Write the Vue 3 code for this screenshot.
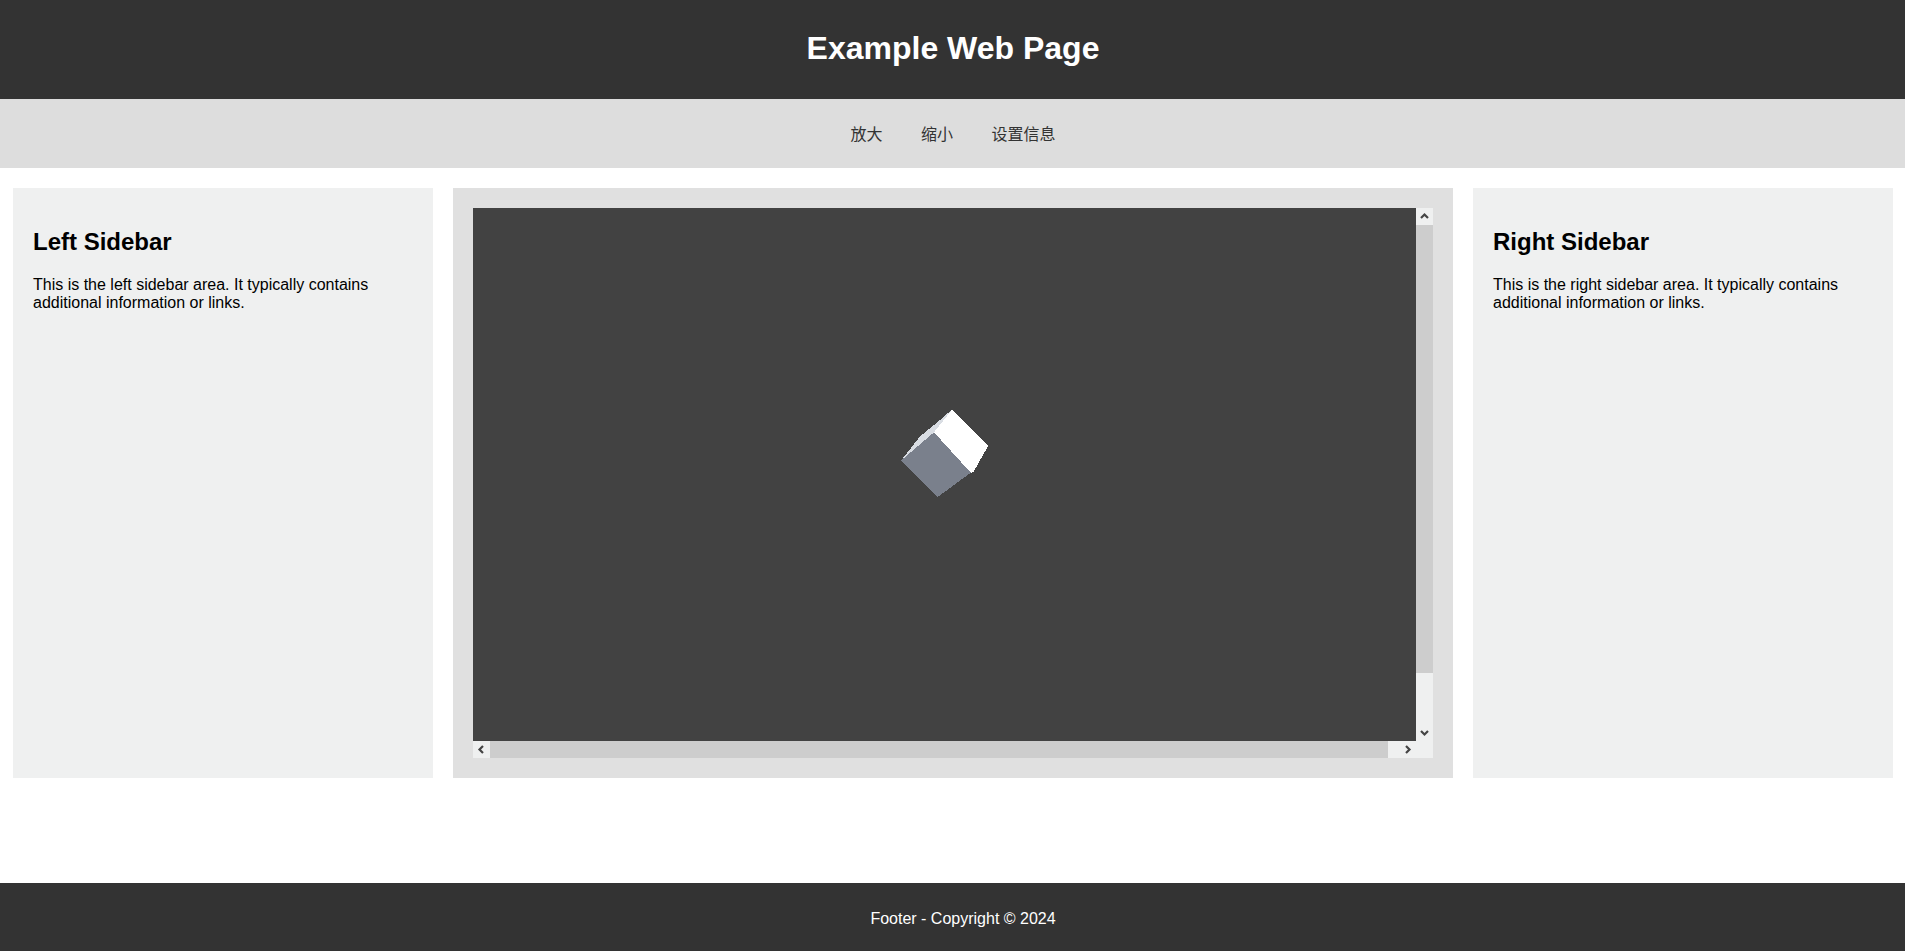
<script setup>
const links = ['放大', '缩小', '设置信息']
const sidebarText = side => `This is the ${side} sidebar area. It typically contains additional information or links.`
</script>

<template>
  <div class="page">
    <header class="header"><h1>Example Web Page</h1></header>
    <nav class="nav">
      <a v-for="l in links" :key="l" href="#" @click.prevent>{{ l }}</a>
    </nav>
    <main class="main">
      <aside class="sidebar">
        <h2>Left Sidebar</h2>
        <p>{{ sidebarText('left') }}</p>
      </aside>
      <section class="center">
        <div class="viewport">
          <div class="canvas">
            <svg class="cube" width="943" height="533" viewBox="473 208 943 533" shape-rendering="crispEdges">
              <polygon points="901.3,460.3 920,436.5 940,420 952.3,409.3 934,432.3" fill="#d9dde3" />
              <polygon points="952.3,409.3 988.2,445.7 973.6,471.9 970.7,472.9 934,432.3" fill="#ffffff" />
              <polygon points="934,432.3 970.7,472.7 937.7,497 901.3,460.3" fill="#7a808c" />
            </svg>
          </div>
          <div class="bar vbar">
            <span class="btn"><svg width="17" height="17" viewBox="0 0 17 17"><path d="M5 10 L8.5 6.5 L12 10" /></svg></span>
            <span class="vtrack"><span class="vthumb"></span></span>
            <span class="btn"><svg width="17" height="17" viewBox="0 0 17 17"><path d="M5 7 L8.5 10.5 L12 7" /></svg></span>
          </div>
          <div class="bar hbar">
            <span class="btn"><svg width="17" height="17" viewBox="0 0 17 17"><path d="M10 5 L6.5 8.5 L10 12" /></svg></span>
            <span class="htrack"><span class="hthumb"></span></span>
            <span class="btn"><svg width="17" height="17" viewBox="0 0 17 17"><path d="M7 5 L10.5 8.5 L7 12" /></svg></span>
          </div>
          <div class="corner"></div>
        </div>
      </section>
      <aside class="sidebar">
        <h2>Right Sidebar</h2>
        <p>{{ sidebarText('right') }}</p>
      </aside>
    </main>
    <footer class="footer">Footer - Copyright © 2024</footer>
  </div>
</template>

<style>
html, body { margin: 0; background: #fff; }
</style>

<style scoped>
.page {
  height: 951px;
  display: flex;
  flex-direction: column;
  font-family: "Liberation Sans", "Noto Sans CJK SC", sans-serif;
  font-size: 16px;
  overflow: hidden;
}
.header {
  height: 99px;
  box-sizing: border-box;
  padding: 0 0 3px 1px;
  background: #333;
  color: #fff;
  display: flex;
  align-items: center;
  justify-content: center;
}
.header h1 { margin: 0; font-size: 32px; font-weight: 700; }
.nav {
  height: 69px;
  box-sizing: border-box;
  padding: 0 0 2px 1px;
  background: #ddd;
  display: flex;
  align-items: center;
  justify-content: center;
  gap: 38.5px;
}
.nav a { color: #333; text-decoration: none; }
.main {
  flex: 1;
  display: flex;
  justify-content: center;
  align-items: flex-start;
  gap: 20px;
  padding: 20px 0 0 1px;
}
.sidebar {
  width: 420px;
  height: 590px;
  box-sizing: border-box;
  background: #eff0f0;
  padding: 20px;
}
.sidebar h2 { margin: 20px 0; font-size: 24px; font-weight: 700; color: #000; line-height: 28px; }
.sidebar p { margin: 0; color: #000; line-height: 18px; }
.center {
  width: 1000px;
  height: 590px;
  box-sizing: border-box;
  background: #e0e0e0;
  padding: 20px;
}
.viewport {
  display: grid;
  grid-template-columns: 943px 17px;
  grid-template-rows: 533px 17px;
}
.canvas { background: #424242; }
.cube { display: block; }
.bar { display: flex; background: #eff0f0; }
.vbar { flex-direction: column; }
.btn { width: 17px; height: 17px; flex: none; display: block; }
.btn svg { display: block; }
.btn path { fill: none; stroke: #444; stroke-width: 2.2; }
.vtrack { flex: 1; display: block; }
.vthumb { display: block; height: 448px; background: #cdcdcd; }
.htrack { flex: 1; display: block; }
.hthumb { display: block; height: 17px; width: 898px; background: #cdcdcd; }
.corner { background: #eff0f0; }
.footer {
  height: 68px;
  box-sizing: border-box;
  padding: 3px 0 0 21px;
  background: #333;
  color: #fff;
  display: flex;
  align-items: center;
  justify-content: center;
}
</style>
